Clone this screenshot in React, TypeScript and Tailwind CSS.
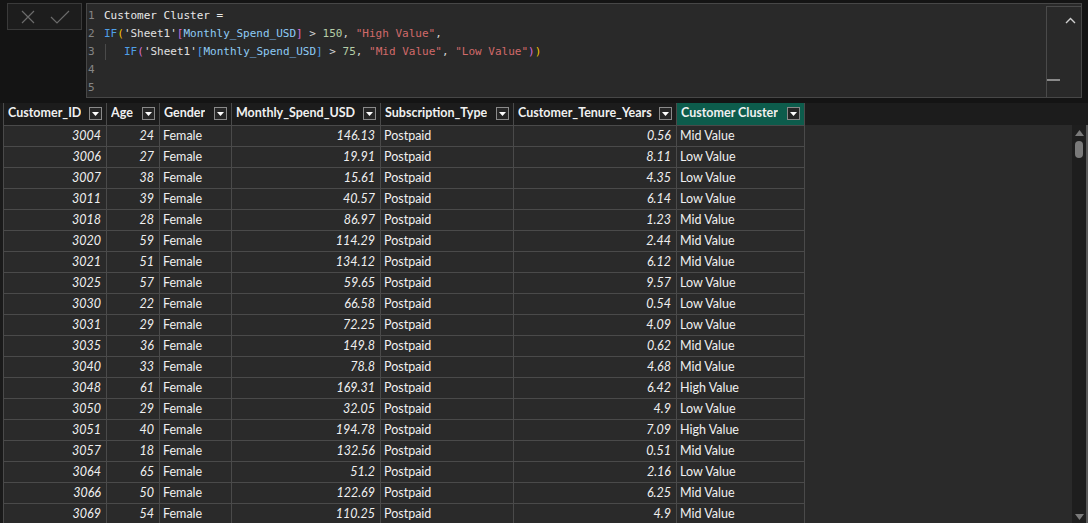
import React from 'react';

type Row = [string, string, string, string, string, string, string];

const columns = [
  { name: 'Customer_ID', width: 103, numeric: true },
  { name: 'Age', width: 53, numeric: true },
  { name: 'Gender', width: 72, numeric: false },
  { name: 'Monthly_Spend_USD', width: 149, numeric: true },
  { name: 'Subscription_Type', width: 133, numeric: false },
  { name: 'Customer_Tenure_Years', width: 163, numeric: true },
  { name: 'Customer Cluster', width: 128, numeric: false },
];

const rows: Row[] = [
  ['3004', '24', 'Female', '146.13', 'Postpaid', '0.56', 'Mid Value'],
  ['3006', '27', 'Female', '19.91', 'Postpaid', '8.11', 'Low Value'],
  ['3007', '38', 'Female', '15.61', 'Postpaid', '4.35', 'Low Value'],
  ['3011', '39', 'Female', '40.57', 'Postpaid', '6.14', 'Low Value'],
  ['3018', '28', 'Female', '86.97', 'Postpaid', '1.23', 'Mid Value'],
  ['3020', '59', 'Female', '114.29', 'Postpaid', '2.44', 'Mid Value'],
  ['3021', '51', 'Female', '134.12', 'Postpaid', '6.12', 'Mid Value'],
  ['3025', '57', 'Female', '59.65', 'Postpaid', '9.57', 'Low Value'],
  ['3030', '22', 'Female', '66.58', 'Postpaid', '0.54', 'Low Value'],
  ['3031', '29', 'Female', '72.25', 'Postpaid', '4.09', 'Low Value'],
  ['3035', '36', 'Female', '149.8', 'Postpaid', '0.62', 'Mid Value'],
  ['3040', '33', 'Female', '78.8', 'Postpaid', '4.68', 'Mid Value'],
  ['3048', '61', 'Female', '169.31', 'Postpaid', '6.42', 'High Value'],
  ['3050', '29', 'Female', '32.05', 'Postpaid', '4.9', 'Low Value'],
  ['3051', '40', 'Female', '194.78', 'Postpaid', '7.09', 'High Value'],
  ['3057', '18', 'Female', '132.56', 'Postpaid', '0.51', 'Mid Value'],
  ['3064', '65', 'Female', '51.2', 'Postpaid', '2.16', 'Low Value'],
  ['3066', '50', 'Female', '122.69', 'Postpaid', '6.25', 'Mid Value'],
  ['3069', '54', 'Female', '110.25', 'Postpaid', '4.9', 'Mid Value'],
];

function FilterButton() {
  return (
    <span className="flex h-[13px] w-[13px] shrink-0 items-center justify-center border border-[#8a8a8a] bg-[#262626]">
      <svg width="7" height="4" viewBox="0 0 7 4">
        <polygon points="0,0 7,0 3.5,4" fill="#ffffff" />
      </svg>
    </span>
  );
}

function FormulaBar() {
  return (
    <div className="flex h-[100px] gap-[4px] pl-[7px] pr-[6px] pt-[3px]">
      {/* cancel / commit */}
      <div className="flex h-[27px] w-[75px] items-center gap-[14px] border border-[#3a3a3a] bg-[#1d1d1d] pl-[12px]">
        <svg width="16" height="16" viewBox="0 0 16 16" stroke="#6b6b6b" strokeWidth="1.2" fill="none">
          <path d="M2 2 L14 14 M14 2 L2 14" />
        </svg>
        <svg width="20" height="16" viewBox="0 0 20 16" stroke="#6b6b6b" strokeWidth="1.2" fill="none">
          <path d="M1 8 L7 14 L19 2" />
        </svg>
      </div>

      {/* editor */}
      <div className="flex h-[95px] flex-1 border border-[#474747] bg-[#292929]">
        <div
          className="flex-1 pt-[3px] text-[11px] leading-[18px]"
          style={{ fontFamily: '"DejaVu Sans Mono", "Liberation Mono", monospace' }}
        >
          <div className="flex">
            <span className="w-[17px] pl-[1px] text-[#858585]">1</span>
            <span className="text-[#e8e8e8]">Customer Cluster =</span>
          </div>
          <div className="flex">
            <span className="w-[17px] pl-[1px] text-[#858585]">2</span>
            <span className="whitespace-pre">
              <span className="text-[#4f9fe6]">IF</span>
              <span className="text-[#f5c400]">(</span>
              <span className="text-[#e0e0e0]">'Sheet1'</span>
              <span className="text-[#d86fd8]">[</span>
              <span className="text-[#8ecbf5]">Monthly_Spend_USD</span>
              <span className="text-[#d86fd8]">]</span>
              <span className="text-[#d4d4d4]"> &gt; </span>
              <span className="text-[#b5cea8]">150</span>
              <span className="text-[#d4d4d4]">, </span>
              <span className="text-[#d26a6a]">"High Value"</span>
              <span className="text-[#d4d4d4]">,</span>
            </span>
          </div>
          <div className="flex">
            <span className="w-[17px] pl-[1px] text-[#858585]">3</span>
            <span className="ml-[1px] mr-[18px] my-[1px] border-l border-[#4a4a4a]" />
            <span className="whitespace-pre">
              <span className="text-[#4f9fe6]">IF</span>
              <span className="text-[#d86fd8]">(</span>
              <span className="text-[#e0e0e0]">'Sheet1'</span>
              <span className="text-[#4f9fe6]">[</span>
              <span className="text-[#8ecbf5]">Monthly_Spend_USD</span>
              <span className="text-[#4f9fe6]">]</span>
              <span className="text-[#d4d4d4]"> &gt; </span>
              <span className="text-[#b5cea8]">75</span>
              <span className="text-[#d4d4d4]">, </span>
              <span className="text-[#d26a6a]">"Mid Value"</span>
              <span className="text-[#d4d4d4]">, </span>
              <span className="text-[#d26a6a]">"Low Value"</span>
              <span className="text-[#d86fd8]">)</span>
              <span className="text-[#f5c400]">)</span>
            </span>
          </div>
          <div className="flex">
            <span className="w-[17px] pl-[1px] text-[#858585]">4</span>
          </div>
          <div className="flex">
            <span className="w-[17px] pl-[1px] text-[#858585]">5</span>
          </div>
        </div>
        <div className="mt-[2px] flex w-[35px] flex-col border-l border-t border-[#4a4a4a]">
          <div className="flex justify-end pr-[5px] pt-[10px]">
            <svg width="11" height="7" viewBox="0 0 11 7" stroke="#d0d0d0" strokeWidth="1.4" fill="none">
              <path d="M1 6 L5.5 1.5 L10 6" />
            </svg>
          </div>
          <div className="mt-[55px] h-[2px] w-[13px] bg-[#8a8a8a]" />
        </div>
      </div>
    </div>
  );
}

function DataTable() {
  return (
    <table
      className="table-fixed border-collapse border-l border-[#4a4a4a] text-[12.5px] text-[#f0f0f0]"
      style={{ fontFamily: 'Lato, "Noto Sans", sans-serif' }}
    >
      <colgroup>
        {columns.map((c) => (
          <col key={c.name} style={{ width: c.width }} />
        ))}
      </colgroup>
      <thead>
        <tr className="h-[22px]">
          {columns.map((c, i) => (
            <th
              key={c.name}
              className={`border-b border-r border-[#4a4a4a] p-0 text-left font-bold ${
                i === columns.length - 1 ? 'bg-[#0d5c4c]' : 'bg-[#1c1c1c]'
              }`}
            >
              <div className="flex items-center justify-between pl-[4px] pr-[4px]">
                <span className="truncate">{c.name}</span>
                <FilterButton />
              </div>
            </th>
          ))}
        </tr>
      </thead>
      <tbody>
        {rows.map((r) => (
          <tr key={r[0]} className="h-[21px]">
            {r.map((v, i) => (
              <td
                key={i}
                className={`border-b border-r border-[#4a4a4a] bg-[#2a2a2a] py-0 leading-[20px] ${
                  columns[i].numeric ? 'pr-[5px] text-right italic' : 'pl-[3px] text-left'
                }`}
              >
                {v}
              </td>
            ))}
          </tr>
        ))}
      </tbody>
    </table>
  );
}

export default function App() {
  return (
    <div className="flex h-[523px] w-[1088px] flex-col overflow-hidden bg-[#141414]">
      <FormulaBar />
      <div className="mt-[3px] flex flex-1 overflow-hidden">
        <div className="w-[3px] shrink-0 bg-[#1a1a1a]" />
        <DataTable />
        <div className="flex flex-1 flex-col">
          <div className="h-[22px] bg-[#1c1c1c]" />
          <div className="flex-1 bg-[#2a2a2a]" />
        </div>
        <div className="flex w-[16px] flex-col">
          <div className="h-[22px] bg-[#1c1c1c]" />
          <div className="flex flex-1">
            <div className="flex w-[14px] flex-col items-center bg-[#1e1e1e]">
              <svg className="mt-[5px]" width="9" height="6" viewBox="0 0 9 6">
                <polygon points="0,6 9,6 4.5,0" fill="#7a7a7a" />
              </svg>
              <div className="mt-[5px] h-[17px] w-[8px] rounded-full bg-[#7a7a7a]" />
              <div className="flex-1" />
              <svg className="mb-[3px]" width="9" height="6" viewBox="0 0 9 6">
                <polygon points="0,0 9,0 4.5,6" fill="#7a7a7a" />
              </svg>
            </div>
            <div className="w-[2px] bg-[#5a5a5a]" />
          </div>
        </div>
      </div>
    </div>
  );
}
